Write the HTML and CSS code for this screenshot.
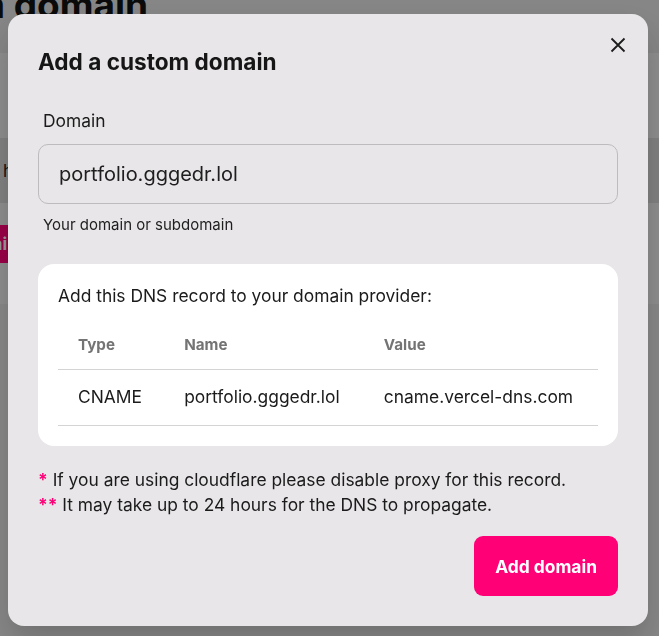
FILE: index.html
```html
<!DOCTYPE html>
<html lang="en">
<head>
<meta charset="utf-8">
<title>Add a custom domain</title>
<link rel="stylesheet" href="styles.css">
</head>
<body>
<div class="page">
  <header class="page-header">
    <h1 class="page-title">Custom domain</h1>
  </header>
  <section class="page-body">
    <div class="page-row"><span class="row-text">h</span></div>
    <button class="page-btn">Domai</button>
    <div class="page-section"></div>
  </section>
</div>

<div class="overlay">
  <div class="modal" role="dialog" aria-labelledby="modal-title">
    <button class="close" aria-label="Close">
      <svg width="16" height="16" viewBox="0 0 16 16"><path d="M1.5 1.5 L14.5 14.5 M14.5 1.5 L1.5 14.5" stroke="#1c1c1c" stroke-width="1.8" fill="none"/></svg>
    </button>
    <h2 id="modal-title" class="modal-title">Add a custom domain</h2>

    <div class="field">
      <label class="field-label" for="domain">Domain</label>
      <div class="input" id="domain">portfolio.gggedr.lol</div>
      <p class="field-help">Your domain or subdomain</p>
    </div>

    <div class="card">
      <p class="card-text">Add this DNS record to your domain provider:</p>
      <table class="dns">
        <thead>
          <tr><th>Type</th><th>Name</th><th>Value</th></tr>
        </thead>
        <tbody>
          <tr><td>CNAME</td><td>portfolio.gggedr.lol</td><td>cname.vercel-dns.com</td></tr>
        </tbody>
      </table>
    </div>

    <div class="notes">
      <p><span class="star">*</span> If you are using cloudflare please disable proxy for this record.</p>
      <p><span class="star">**</span> It may take up to 24 hours for the DNS to propagate.</p>
    </div>

    <div class="actions">
      <button class="primary">Add domain</button>
    </div>
  </div>
</div>
</body>
</html>
```

FILE: styles.css
```css
* { box-sizing: border-box; }
html, body { margin: 0; padding: 0; }
body {
  font-family: Inter, "Noto Sans", sans-serif;
  color: #1b1b1b;
  background: #e2e2e2;
  width: 659px;
  height: 636px;
  overflow: hidden;
}

/* underlying page */
.page { height: 636px; background: #ececec; }
.page-header {
  height: 53px;
  background: #dfdfdf;
  overflow: hidden;
}
.page-title {
  width: 148px;
  direction: rtl;
  margin: -17px 0 0 0;
  font-size: 37px;
  line-height: 44px;
  font-weight: 700;
  color: #111;
  white-space: nowrap;
}
.page-body { padding-top: 85px; }
.page-row {
  height: 65px;
  background: #d6d6d6;
  display: flex;
  align-items: center;
}
.row-text { font-size: 17px; margin-left: 3px; color: #222; }
.page-btn {
  display: block;
  margin-top: 22px;
  margin-left: -52px;
  height: 38px;
  width: 60px;
  border: 0;
  background: #ff0077;
  color: #fff;
  font-family: inherit;
  font-weight: 700;
  font-size: 17px;
  text-align: right;
  padding: 0 1px 0 0;
  white-space: nowrap;
}
.page-section {
  margin-top: 41px;
  height: 340px;
  background: #e2e2e2;
}

/* overlay */
.overlay {
  position: fixed;
  inset: 0;
  background: rgba(0, 0, 0, 0.4);
  display: flex;
  justify-content: flex-start;
  align-items: flex-start;
  padding: 14px 8px 0;
}
.modal {
  position: relative;
  width: 640px;
  background: #e8e6e8;
  border-radius: 16px;
  padding: 34px 30px 30px;
  box-shadow: 0 16px 32px rgba(0, 0, 0, 0.18);
}
.close {
  position: absolute;
  top: 23px;
  right: 22px;
  width: 16px;
  height: 16px;
  padding: 0;
  border: 0;
  background: none;
  display: block;
}
.close svg { display: block; }

.modal-title {
  margin: 0;
  font-size: 22.6px;
  line-height: 28px;
  font-weight: 700;
  color: #161616;
}

.field { margin-top: 34px; }
.field-label {
  display: block;
  padding-left: 5px;
  font-size: 17.4px;
  line-height: 21px;
  color: #1b1b1b;
}
.input {
  margin-top: 13px;
  height: 60px;
  border: 1px solid #bdbcbd;
  border-radius: 10px;
  padding: 0 20px;
  display: flex;
  align-items: center;
  font-size: 20px;
  color: #1e1e1e;
}
.field-help {
  margin: 12px 0 0;
  padding-left: 5px;
  font-size: 15px;
  line-height: 18px;
  color: #1e1e1e;
}

.card {
  margin-top: 30px;
  background: #ffffff;
  border-radius: 16px;
  padding: 20px;
}
.card-text {
  margin: 0;
  font-size: 17.4px;
  line-height: 24px;
  color: #1b1b1b;
}
.dns {
  margin-top: 8px;
  width: 100%;
  border-collapse: collapse;
}
.dns th {
  text-align: left;
  font-size: 15.2px;
  line-height: 20px;
  font-weight: 700;
  color: #747474;
  padding: 19px 20px 14px;
  border-bottom: 1px solid #d4d4d4;
}
.dns td {
  font-size: 17.4px;
  line-height: 24px;
  color: #1b1b1b;
  padding: 15px 20px 16px;
  border-bottom: 1px solid #d4d4d4;
  white-space: nowrap;
}

.notes { margin-top: 21px; }
.notes p {
  margin: 0;
  font-size: 17.4px;
  line-height: 25px;
  color: #1b1b1b;
}
.star { color: #ff0077; font-weight: 700; }

.actions {
  margin-top: 19px;
  display: flex;
  justify-content: flex-end;
}
.primary {
  height: 60px;
  padding: 0 21px;
  border: 0;
  border-radius: 9px;
  background: #ff0077;
  color: #ffffff;
  font-family: inherit;
  font-size: 17.4px;
  font-weight: 700;
}
```
